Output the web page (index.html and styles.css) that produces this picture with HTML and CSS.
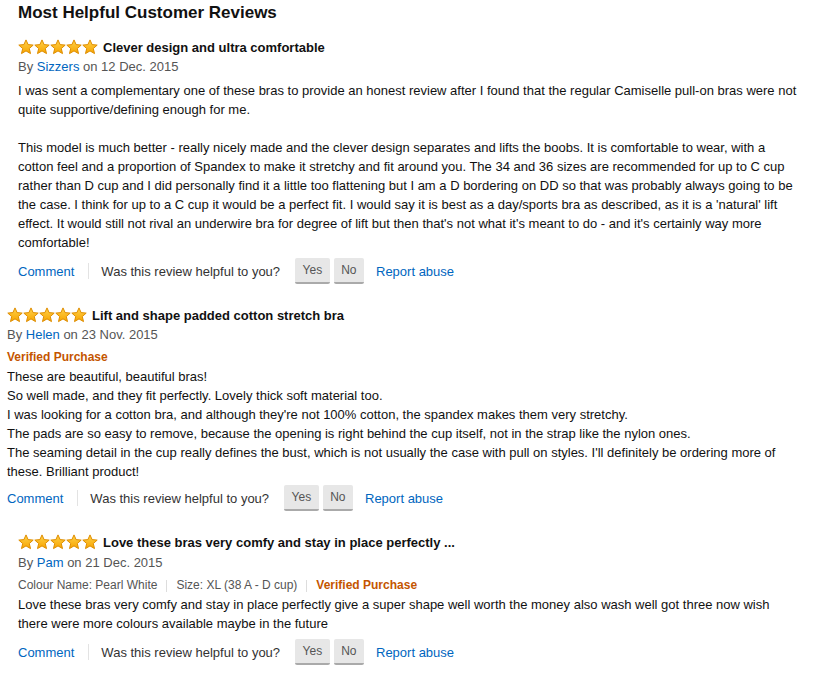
FILE: index.html
```html
<html>
<head>
	<meta http-equiv="Content-Type" content="text/html; charset=UTF-8">
	<link rel="stylesheet" href="styles.css">
</head>
<body>
	<svg width="0" height="0" class="defs">
		<defs>
			<linearGradient id="star_grad" x1="0" y1="0" x2="0" y2="1">
				<stop offset="0" stop-color="#ffd24a"/>
				<stop offset="1" stop-color="#f7a400"/>
			</linearGradient>
			<symbol id="star" viewBox="0 0 16 16">
				<polygon points="8,0.9 10.1,5.6 15.2,6.1 11.3,9.5 12.5,14.6 8,11.9 3.5,14.6 4.7,9.5 0.8,6.1 5.9,5.6" fill="url(#star_grad)" stroke="#de8d00" stroke-width="1" stroke-linejoin="round"/>
			</symbol>
		</defs>
	</svg>

	<div class="page">
		<h2 class="titre">Most Helpful Customer Reviews</h2>

		<div class="review">
			<div class="review_head">
				<span class="etoiles">
					<svg><use href="#star"/></svg><svg><use href="#star"/></svg><svg><use href="#star"/></svg><svg><use href="#star"/></svg><svg><use href="#star"/></svg>
				</span>
				<span class="review_titre">Clever design and ultra comfortable</span>
			</div>
			<div class="review_by">By <a href="#" class="lien">Sizzers</a> on 12 Dec. 2015</div>
			<div class="review_texte">
				I was sent a complementary one of these bras to provide an honest review after I found that the regular Camiselle pull-on bras were not quite supportive/defining enough for me.<br><br>
				This model is much better - really nicely made and the clever design separates and lifts the boobs. It is comfortable to wear, with a cotton feel and a proportion of Spandex to make it stretchy and fit around you. The 34 and 36 sizes are recommended for up to C cup rather than D cup and I did personally find it a little too flattening but I am a D bordering on DD so that was probably always going to be the case. I think for up to a C cup it would be a perfect fit. I would say it is best as a day/sports bra as described, as it is a 'natural' lift effect. It would still not rival an underwire bra for degree of lift but then that's not what it's meant to do - and it's certainly way more comfortable!
			</div>
			<div class="review_actions">
				<a href="#" class="lien">Comment</a>
				<span class="sep"></span>
				<span class="question">Was this review helpful to you?</span>
				<span class="btn">Yes</span>
				<span class="btn">No</span>
				<a href="#" class="lien abus">Report abuse</a>
			</div>
		</div>

		<div class="review review_decale">
			<div class="review_head">
				<span class="etoiles">
					<svg><use href="#star"/></svg><svg><use href="#star"/></svg><svg><use href="#star"/></svg><svg><use href="#star"/></svg><svg><use href="#star"/></svg>
				</span>
				<span class="review_titre">Lift and shape padded cotton stretch bra</span>
			</div>
			<div class="review_by">By <a href="#" class="lien">Helen</a> on 23 Nov. 2015</div>
			<div class="verifie verifie_ligne">Verified Purchase</div>
			<div class="review_texte">
				These are beautiful, beautiful bras!<br>
				So well made, and they fit perfectly. Lovely thick soft material too.<br>
				I was looking for a cotton bra, and although they're not 100% cotton, the spandex makes them very stretchy.<br>
				The pads are so easy to remove, because the opening is right behind the cup itself, not in the strap like the nylon ones.<br>
				The seaming detail in the cup really defines the bust, which is not usually the case with pull on styles. I'll definitely be ordering more of these. Brilliant product!
			</div>
			<div class="review_actions">
				<a href="#" class="lien">Comment</a>
				<span class="sep"></span>
				<span class="question">Was this review helpful to you?</span>
				<span class="btn">Yes</span>
				<span class="btn">No</span>
				<a href="#" class="lien abus">Report abuse</a>
			</div>
		</div>

		<div class="review">
			<div class="review_head">
				<span class="etoiles">
					<svg><use href="#star"/></svg><svg><use href="#star"/></svg><svg><use href="#star"/></svg><svg><use href="#star"/></svg><svg><use href="#star"/></svg>
				</span>
				<span class="review_titre">Love these bras very comfy and stay in place perfectly ...</span>
			</div>
			<div class="review_by review_by_bas">By <a href="#" class="lien">Pam</a> on 21 Dec. 2015</div>
			<div class="review_format">
				<span>Colour Name: Pearl White</span>
				<span class="sep_petit"></span>
				<span>Size: XL (38 A - D cup)</span>
				<span class="sep_petit"></span>
				<span class="verifie">Verified Purchase</span>
			</div>
			<div class="review_texte">
				Love these bras very comfy and stay in place perfectly give a super shape well worth the money also wash well got three now wish there were more colours available maybe in the future
			</div>
			<div class="review_actions">
				<a href="#" class="lien">Comment</a>
				<span class="sep"></span>
				<span class="question">Was this review helpful to you?</span>
				<span class="btn">Yes</span>
				<span class="btn">No</span>
				<a href="#" class="lien abus">Report abuse</a>
			</div>
		</div>
	</div>
</body>
</html>
```

FILE: styles.css
```css
body
{
	margin: 0;
	background-color: #fff;
	font-family: "Liberation Sans", Arial, sans-serif;
	font-size: 13px;
	color: #111;
}
.defs
{
	position: absolute;
}
.page
{
	padding: 3px 27px 0 18px;
}
.titre
{
	margin: 0;
	font-size: 17px;
	line-height: 20px;
	font-weight: bold;
	color: #111;
}
.review
{
	margin-top: 14px;
	margin-bottom: 21px;
}
.review + .review
{
	margin-top: 0;
}
.review_decale
{
	margin-left: -11px;
}
.review_head
{
	display: flex;
	align-items: center;
	height: 20px;
}
.etoiles
{
	display: flex;
	margin-right: 5px;
}
.etoiles svg
{
	width: 16px;
	height: 16px;
}
.review_titre
{
	font-weight: bold;
	color: #111;
}
.review_by
{
	line-height: 20px;
	color: #555;
}
.review_by_bas
{
	margin-top: 1px;
}
.lien
{
	color: #0066c0;
	text-decoration: none;
}
.verifie
{
	color: #c45500;
	font-weight: bold;
	font-size: 12px;
}
.verifie_ligne
{
	line-height: 19px;
	margin-top: 3px;
}
.review_format
{
	display: flex;
	align-items: center;
	margin-top: 3px;
	line-height: 19px;
	font-size: 12px;
	color: #555;
}
.sep_petit
{
	width: 1px;
	height: 12px;
	background-color: #ddd;
	margin: 0 9px;
}
.review_texte
{
	margin-top: 4px;
	line-height: 19px;
	color: #111;
}
.review_format + .review_texte,
.verifie_ligne + .review_texte
{
	margin-top: 0;
}
.review_actions
{
	display: flex;
	align-items: center;
	margin-top: 6px;
	height: 26px;
	color: #333;
}
.review_decale .review_actions
{
	margin-top: 4px;
}
.sep
{
	width: 1px;
	height: 16px;
	background-color: #e3e3e3;
	margin: 0 12px 0 14px;
}
.question
{
	margin-right: 15px;
}
.btn
{
	box-sizing: border-box;
	height: 26px;
	padding: 0 7.5px;
	margin-right: 4px;
	background-color: #e7e7e7;
	border-bottom: 2px solid #aaa;
	border-radius: 2px;
	font-size: 12px;
	line-height: 24px;
	color: #555;
}
.abus
{
	margin-left: 8px;
}
```
